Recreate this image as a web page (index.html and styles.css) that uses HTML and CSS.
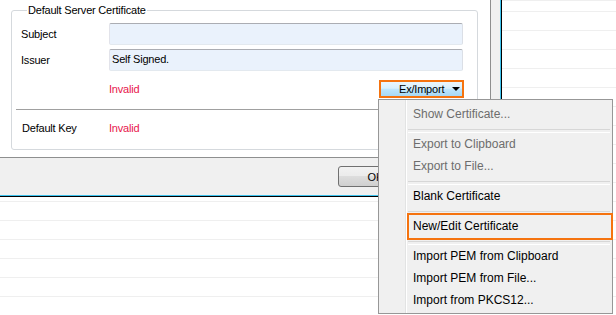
FILE: index.html
```html
<!DOCTYPE html>
<html lang="en">
  <head>
    <meta charset="UTF-8" />
    <title>Default Server Certificate</title>
    <link rel="stylesheet" href="styles.css">
  </head>
  <body>
    <!-- dialog window -->
    <div class="dialog">
      <div class="frame">
        <div class="panel">
          <fieldset class="group">
            <legend>Default Server Certificate</legend>
            <div class="group-body">
              <div class="row">
                <span class="label">Subject</span>
                <div class="field"></div>
              </div>
              <div class="row">
                <span class="label">Issuer</span>
                <div class="field">Self Signed.</div>
              </div>
              <div class="row row-status">
                <span class="label"></span>
                <div class="status">
                  <span class="invalid">Invalid</span>
                  <button class="exbtn">Ex/Import
                    <svg class="caret" width="8" height="4" viewBox="0 0 8 4"><polygon points="0,0 8,0 4,4" fill="#000"/></svg>
                  </button>
                </div>
              </div>
              <div class="sep"></div>
              <div class="row row-key">
                <span class="label">Default Key</span>
                <span class="invalid">Invalid</span>
              </div>
            </div>
          </fieldset>
        </div>
        <div class="footer">
          <button class="btn">OK</button>
        </div>
      </div>
    </div>

    <!-- popup menu of Ex/Import -->
    <div class="menu">
      <div class="item disabled">Show Certificate...</div>
      <div class="menu-sep"></div>
      <div class="item disabled">Export to Clipboard</div>
      <div class="item disabled">Export to File...</div>
      <div class="menu-sep"></div>
      <div class="item">Blank Certificate</div>
      <div class="menu-sep"></div>
      <div class="item marked">New/Edit Certificate</div>
      <div class="menu-sep"></div>
      <div class="item">Import PEM from Clipboard</div>
      <div class="item">Import PEM from File...</div>
      <div class="item">Import from PKCS12...</div>
    </div>
  </body>
</html>
```

FILE: styles.css
```css
* {
  margin: 0;
  padding: 0;
  box-sizing: border-box;
}

body {
  width: 616px;
  height: 315px;
  overflow: hidden;
  font-family: "Liberation Sans", Arial, sans-serif;
  font-size: 11px;
  color: #000;
  /* list rows of the main window behind */
  background: repeating-linear-gradient(to bottom, #efefef 0, #efefef 1px, #fff 1px, #fff 19px) 0 11px;
}

/* dialog */
.dialog {
  width: 502px;
  border-right: 1px solid #000;
  border-bottom: 1px solid #000;
}

.frame {
  background: #f0f0f0;
  border-right: 1px solid #3ec3ee;
  border-bottom: 1px solid #3ec3ee;
}

.panel {
  width: 491px;
  height: 158px;
  background: #fff;
  border-right: 1px solid #8e8f8f;
  border-bottom: 1px solid #8e8f8f;
  padding-top: 3px;
  padding-left: 11px;
}

/* group box */
.group {
  width: 467px;
  border: 1px solid #d5d9dd;
  border-radius: 3px;
  padding: 6px 14px 13px 9px;
  letter-spacing: -0.2px;
}

.group legend {
  margin-left: 6px;
  padding: 0 1px;
  line-height: 14px;
}

.group-body {
  display: flex;
  flex-direction: column;
}

.row {
  display: grid;
  grid-template-columns: 88px 1fr;
  align-items: center;
  height: 22px;
  margin-bottom: 4px;
}

.field {
  height: 22px;
  background: #eaf2fc;
  border: 1px solid;
  border-color: #abadb3 #dbdfe6 #e3e9ef #e2e3ea;
  border-radius: 2px;
  padding: 2px 0 0 2px;
  line-height: 15px;
}

.row-status {
  height: 18px;
  margin-top: 5px;
  margin-bottom: 0;
}

.status {
  display: flex;
  justify-content: space-between;
  align-items: center;
}

.invalid {
  color: #e8164c;
}

.exbtn {
  display: flex;
  align-items: center;
  gap: 8px;
  width: 85px;
  height: 18px;
  margin-right: -1px;
  padding-left: 18px;
  border: 2px solid #f5730f;
  background: linear-gradient(#eaf6fd, #d9f0fc 45%, #bee6fd 50%, #a7d9f5);
  font: inherit;
  letter-spacing: -0.2px;
  color: #000;
}

.sep {
  height: 2px;
  margin: 11px -3px 0 -5px;
  border-top: 1px solid #a0a0a0;
  border-bottom: 1px solid #fff;
}

.row-key {
  height: 16px;
  margin: 9px 0 0 1px;
  grid-template-columns: 87px 1fr;
}

/* bottom buttons */
.footer {
  height: 37px;
  display: flex;
  align-items: center;
  padding-left: 338px;
}

.btn {
  width: 75px;
  height: 21px;
  border: 1px solid #707070;
  border-radius: 3px;
  background: linear-gradient(#f2f2f2, #ebebeb 50%, #dddddd 50%, #cfcfcf);
  font: inherit;
  color: #000;
}

/* popup menu */
.menu {
  position: absolute;
  left: 378px;
  top: 99px;
  width: 235px;
  height: 215px;
  padding: 3px 0 2px;
  border: 1px solid #979797;
  background:
    linear-gradient(to right, transparent 26px, #e2e3e3 26px, #e2e3e3 27px, #fff 27px, #fff 28px, transparent 28px),
    #f0f0f0;
  font-size: 12px;
}

.item {
  height: 22px;
  line-height: 22px;
  padding-left: 34px;
  white-space: nowrap;
}

.item.disabled {
  color: #6d6d6d;
}

.item.marked {
  position: relative;
}

.item.marked::after {
  content: "";
  position: absolute;
  left: 28px;
  right: -1px;
  top: -2px;
  bottom: -3px;
  border: 2px solid #f5730f;
}

.menu-sep {
  height: 8px;
  margin: 0 2px 0 29px;
  padding-top: 4px;
}

.menu-sep::before {
  content: "";
  display: block;
  height: 2px;
  border-top: 1px solid #d7d7d7;
  border-bottom: 1px solid #fff;
}
```
